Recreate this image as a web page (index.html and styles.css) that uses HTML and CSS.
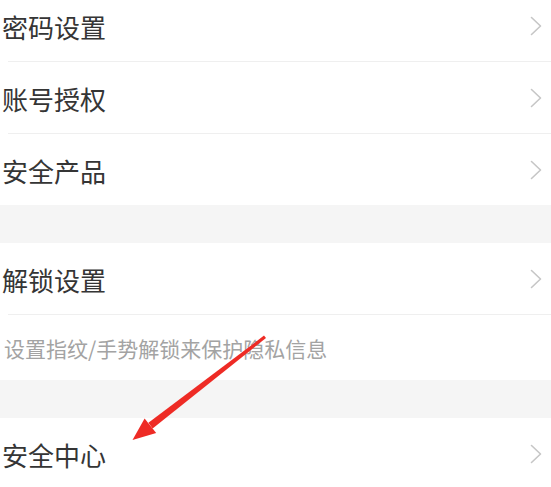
FILE: index.html
```html
<!DOCTYPE html>
<html lang="zh-CN">
<head>
<meta charset="utf-8">
<link rel="stylesheet" href="styles.css">
</head>
<body>
<div class="page">
  <div class="group group-first">
    <div class="row divided"><span class="label">密码设置</span><svg class="chev" width="12" height="20" viewBox="0 0 12 20"><polyline points="1.5,1.5 10.5,10 1.5,18.5"/></svg></div>
    <div class="row divided"><span class="label">账号授权</span><svg class="chev" width="12" height="20" viewBox="0 0 12 20"><polyline points="1.5,1.5 10.5,10 1.5,18.5"/></svg></div>
    <div class="row"><span class="label">安全产品</span><svg class="chev" width="12" height="20" viewBox="0 0 12 20"><polyline points="1.5,1.5 10.5,10 1.5,18.5"/></svg></div>
  </div>
  <div class="gap"></div>
  <div class="group">
    <div class="row divided"><span class="label">解锁设置</span><svg class="chev" width="12" height="20" viewBox="0 0 12 20"><polyline points="1.5,1.5 10.5,10 1.5,18.5"/></svg></div>
    <div class="hint">设置指纹/手势解锁来保护隐私信息</div>
  </div>
  <div class="gap"></div>
  <div class="group">
    <div class="row"><span class="label">安全中心</span><svg class="chev" width="12" height="20" viewBox="0 0 12 20"><polyline points="1.5,1.5 10.5,10 1.5,18.5"/></svg></div>
  </div>
  <svg class="arrow" width="551" height="487" viewBox="0 0 551 487">
    <polygon points="266,338 264,335.6 148.4,422.8 152.6,428.4"/>
    <polygon points="132.5,440 144.6,418.4 156.2,433"/>
  </svg>
</div>
</body>
</html>
```
FILE: styles.css
```css
html, body {
  margin: 0;
  padding: 0;
  background: #ffffff;
}
body {
  font-family: "Noto Sans CJK SC", "Noto Sans", sans-serif;
  overflow: hidden;
  height: 487px;
}
.page {
  position: relative;
  width: 551px;
  height: 487px;
  overflow: hidden;
  display: flex;
  flex-direction: column;
}
.group {
  background: #ffffff;
  display: flex;
  flex-direction: column;
}
.group-first {
  margin-top: -10px;
}
.row {
  box-sizing: border-box;
  height: 71px;
  display: flex;
  align-items: center;
  justify-content: space-between;
  padding: 3px 9px 0 2px;
  flex-shrink: 0;
}
.row.divided {
  height: 72px;
  padding-bottom: 1px;
  background: linear-gradient(#efefef, #efefef) no-repeat 8px 100% / calc(100% - 8px) 1px, #ffffff;
}
.label {
  font-size: 26px;
  line-height: 1;
  color: #353535;
}
.chev {
  display: block;
  fill: none;
  stroke: #c6c6c6;
  stroke-width: 1.6;
  stroke-linecap: round;
  stroke-linejoin: round;
  margin-top: -2px;
}
.hint {
  box-sizing: border-box;
  height: 65px;
  display: flex;
  align-items: center;
  padding: 2px 0 0 4px;
  font-size: 21px;
  line-height: 1;
  color: #a3a3a3;
  flex-shrink: 0;
}
.gap {
  height: 38px;
  background: #f5f5f5;
  flex-shrink: 0;
}
.arrow {
  position: absolute;
  left: 0;
  top: 0;
  fill: #ee2b25;
  pointer-events: none;
}
```
